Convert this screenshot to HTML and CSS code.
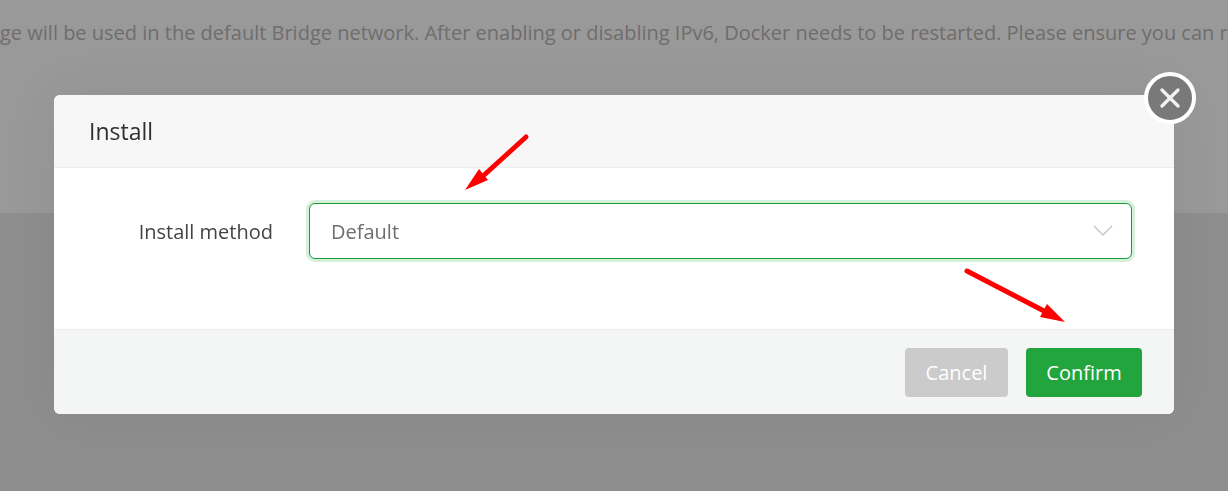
FILE: index.html
```html
<!DOCTYPE html>
<html lang="en">
<head>
    <meta charset="UTF-8">
    <meta name="viewport" content="width=device-width, initial-scale=1.0">
    <title>Install</title>
    <link rel="stylesheet" href="styles.css">
</head>
<body>

    <div class="page">
        <div class="page-top">
            <p class="page-text">ge will be used in the default Bridge network. After enabling or disabling IPv6, Docker needs to be restarted. Please ensure you can re</p>
        </div>
        <div class="page-bottom"></div>
    </div>

    <div class="mask">
        <div class="modal">
            <button class="close" aria-label="Close">
                <svg width="20" height="20" viewBox="0 0 20 20">
                    <path d="M2 2 L18 18 M18 2 L2 18" stroke="#f2f2f2" stroke-width="3.2" stroke-linecap="round" fill="none"/>
                </svg>
            </button>

            <div class="modal-header">Install</div>

            <div class="modal-body">
                <label class="field-label">Install method</label>
                <div class="select">
                    <span>Default</span>
                    <svg width="20" height="12" viewBox="0 0 20 12">
                        <path d="M1 1 L10 10 L19 1" stroke="#c8c8c8" stroke-width="1.5" fill="none"/>
                    </svg>
                </div>
            </div>

            <div class="modal-footer">
                <button class="btn btn-cancel">Cancel</button>
                <button class="btn btn-confirm">Confirm</button>
            </div>

            <!-- red arrows drawn over the screenshot -->
            <svg class="arrows" width="1120" height="319" viewBox="0 0 1120 319">
                <path d="M472 42 L429 81" stroke="#fe0000" stroke-width="5" stroke-linecap="round" fill="none"/>
                <polygon points="411,95 425,74 434,85" fill="#fe0000"/>
                <path d="M913 176 L990 216" stroke="#fe0000" stroke-width="5" stroke-linecap="round" fill="none"/>
                <polygon points="1011,227 993,209 986,222" fill="#fe0000"/>
            </svg>
        </div>
    </div>

</body>
</html>
```

FILE: styles.css
```css
* {
    box-sizing: border-box;
}
html, body {
    margin: 0;
    height: 100%;
    overflow: hidden;
}
body {
    font-family: 'Open Sans', 'Noto Sans', sans-serif;
    color: #333;
}
.page {
    display: flex;
    flex-direction: column;
    height: 491px;
}
.page-top {
    height: 214px;
    background-color: #999;
    border-bottom: 1px solid #8f8f8f;
    overflow: hidden;
}
.page-text {
    margin: 19px 0 0;
    font-size: 20px;
    line-height: 28px;
    white-space: nowrap;
    color: #6f6d6d;
}
.page-bottom {
    flex: 1;
    background-color: #8e8e8e;
}
.mask {
    position: fixed;
    inset: 0;
    display: flex;
    justify-content: center;
    padding-top: 95px;
}
.modal {
    position: relative;
    width: 1120px;
    height: 319px;
    display: flex;
    flex-direction: column;
    background-color: #fff;
    border-radius: 6px;
    box-shadow: 0 0 60px rgba(0, 0, 0, 0.06);
}
.modal-header {
    height: 73px;
    padding-left: 35px;
    background-color: #f7f7f7;
    border-bottom: 1px solid #ececec;
    border-radius: 6px 6px 0 0;
    font-size: 23px;
    line-height: 73px;
    color: #2f2f2f;
}
.modal-body {
    flex: 1;
    display: flex;
    align-items: flex-start;
    padding: 35px 42px 0 0;
}
.field-label {
    width: 219px;
    height: 56px;
    flex-shrink: 0;
    text-align: right;
    font-size: 20px;
    line-height: 58px;
    color: #444;
}
.select {
    flex: 1;
    height: 56px;
    margin-left: 36px;
    padding: 0 18px 0 21px;
    display: flex;
    align-items: center;
    justify-content: space-between;
    background-color: #fff;
    border: 1px solid #1c9a37;
    border-radius: 6px;
    box-shadow: 0 0 0 3px #d5f0da;
    font-size: 20px;
    color: #6e6e6e;
}
.modal-footer {
    height: 85px;
    padding: 18px 32px 0 0;
    display: flex;
    justify-content: flex-end;
    gap: 18px;
    background-color: #f4f6f6;
    border-top: 1px solid #ececec;
    border-radius: 0 0 6px 6px;
}
.btn {
    height: 49px;
    padding: 0;
    border: none;
    border-radius: 4px;
    color: #fff;
    font-family: inherit;
    font-size: 20px;
}
.btn-cancel {
    width: 103px;
    background-color: #cbcbcb;
}
.btn-confirm {
    width: 116px;
    background-color: #22a53d;
}
.close {
    position: absolute;
    top: -23px;
    right: -22px;
    width: 52px;
    height: 52px;
    padding: 0;
    display: flex;
    align-items: center;
    justify-content: center;
    background-color: #797979;
    border: 4px solid #fff;
    border-radius: 50%;
}
.arrows {
    position: absolute;
    top: 0;
    left: 0;
    pointer-events: none;
}
```
